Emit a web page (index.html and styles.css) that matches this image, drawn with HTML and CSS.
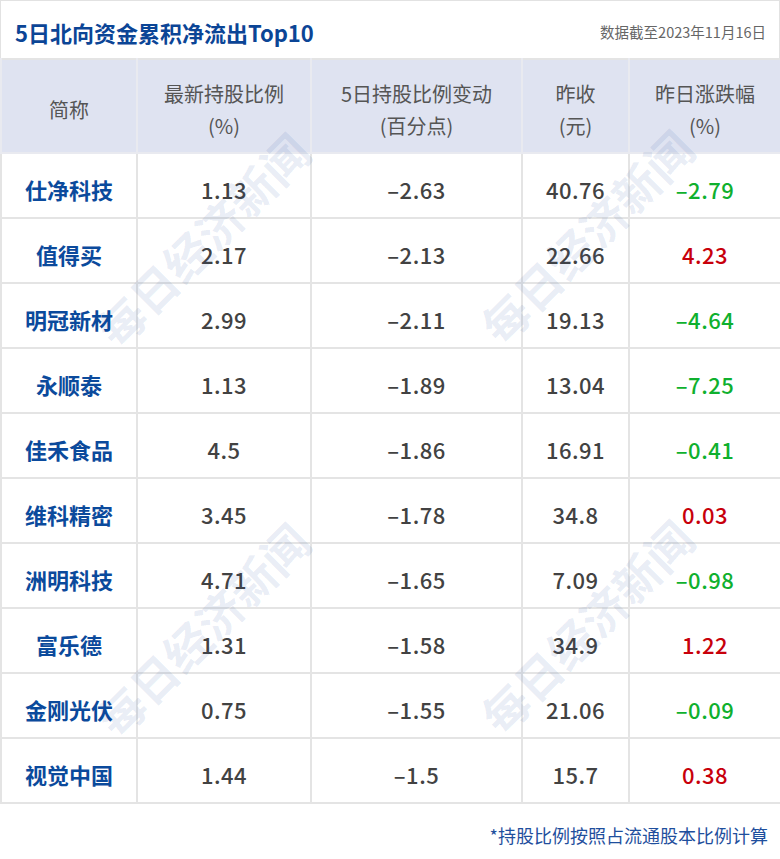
FILE: index.html
```html
<!DOCTYPE html>
<html lang="zh">
<head>
<meta charset="utf-8">
<link rel="stylesheet" href="styles.css">
</head>
<body>
<div class="card">
  <div class="titlebar">
    <div class="title">5日北向资金累积净流出Top10</div>
    <div class="date">数据截至2023年11月16日</div>
  </div>
  <table class="grid">
    <colgroup>
      <col class="c1"><col class="c2"><col class="c3"><col class="c4"><col class="c5">
    </colgroup>
    <thead>
      <tr>
        <th>简称</th>
        <th>最新持股比例<br>(%)</th>
        <th>5日持股比例变动<br>(百分点)</th>
        <th>昨收<br>(元)</th>
        <th>昨日涨跌幅<br>(%)</th>
      </tr>
    </thead>
    <tbody>
      <tr><td class="name">仕净科技</td><td>1.13</td><td>–2.63</td><td>40.76</td><td class="down">–2.79</td></tr>
      <tr><td class="name">值得买</td><td>2.17</td><td>–2.13</td><td>22.66</td><td class="up">4.23</td></tr>
      <tr><td class="name">明冠新材</td><td>2.99</td><td>–2.11</td><td>19.13</td><td class="down">–4.64</td></tr>
      <tr><td class="name">永顺泰</td><td>1.13</td><td>–1.89</td><td>13.04</td><td class="down">–7.25</td></tr>
      <tr><td class="name">佳禾食品</td><td>4.5</td><td>–1.86</td><td>16.91</td><td class="down">–0.41</td></tr>
      <tr><td class="name">维科精密</td><td>3.45</td><td>–1.78</td><td>34.8</td><td class="up">0.03</td></tr>
      <tr><td class="name">洲明科技</td><td>4.71</td><td>–1.65</td><td>7.09</td><td class="down">–0.98</td></tr>
      <tr><td class="name">富乐德</td><td>1.31</td><td>–1.58</td><td>34.9</td><td class="up">1.22</td></tr>
      <tr><td class="name">金刚光伏</td><td>0.75</td><td>–1.55</td><td>21.06</td><td class="down">–0.09</td></tr>
      <tr><td class="name">视觉中国</td><td>1.44</td><td>–1.5</td><td>15.7</td><td class="up">0.38</td></tr>
    </tbody>
  </table>
  <div class="wm wm1">每日经济新闻</div>
  <div class="wm wm2">每日经济新闻</div>
  <div class="wm wm3">每日经济新闻</div>
  <div class="wm wm4">每日经济新闻</div>
</div>
<div class="note">*持股比例按照占流通股本比例计算</div>
</body>
</html>
```

FILE: styles.css
```css
html, body {
  margin: 0;
  padding: 0;
  background: #ffffff;
}
body {
  width: 780px;
  font-family: "Noto Sans CJK SC", "Noto Sans", sans-serif;
  color: #444;
}
.card {
  position: relative;
  width: 780px;
  box-sizing: border-box;
  border-top: 1px solid #e2e2e2;
  overflow: hidden;
}
.titlebar {
  height: 57px;
  display: flex;
  align-items: center;
  justify-content: space-between;
  padding: 0 13px 0 14px;
  border-left: 1px solid #e2e2e2;
  border-right: 1px solid #e2e2e2;
}
.title {
  font-size: 22px;
  font-weight: 700;
  color: #0b4596;
  padding-top: 4px;
}
.date {
  font-size: 14.5px;
  color: #666;
  padding-top: 4px;
}
.grid {
  width: 780px;
  table-layout: fixed;
  border-collapse: collapse;
  border: 2px solid #e4e4e4;
}
.c1 { width: 136px; }
.c2 { width: 174px; }
.c3 { width: 211px; }
.c4 { width: 107px; }
.c5 { width: 152px; }
.grid th {
  height: 84px;
  background: #dfe3f1;
  color: #555;
  font-weight: 400;
  font-size: 20px;
  line-height: 32px;
  border: 2px solid #e9eaf0;
  border-top: none;
  padding: 8px 0 0;
  text-align: center;
}
.grid td {
  height: 57px;
  border: 2px solid #e4e4e4;
  padding: 6px 0 0;
  text-align: center;
  font-size: 22px;
  font-weight: 500;
  letter-spacing: 0.5px;
  color: #424242;
}
.grid td.name {
  font-weight: 700;
  font-size: 22px;
  letter-spacing: 0;
  color: #0b4a9c;
}
.grid td.down { color: #0fb02e; }
.grid td.up { color: #c8000b; }
.wm {
  position: absolute;
  font-size: 46px;
  font-weight: 700;
  letter-spacing: 0;
  color: rgba(40, 80, 160, 0.11);
  white-space: nowrap;
  transform: translate(-50%, -50%) rotate(-45deg);
  pointer-events: none;
}
.wm1 { left: 202px; top: 238px; }
.wm2 { left: 586px; top: 235px; }
.wm3 { left: 202px; top: 628px; }
.wm4 { left: 586px; top: 625px; }
.note {
  text-align: right;
  padding: 18px 12px 0 0;
  font-size: 18px;
  color: #1f4f9d;
}
```
